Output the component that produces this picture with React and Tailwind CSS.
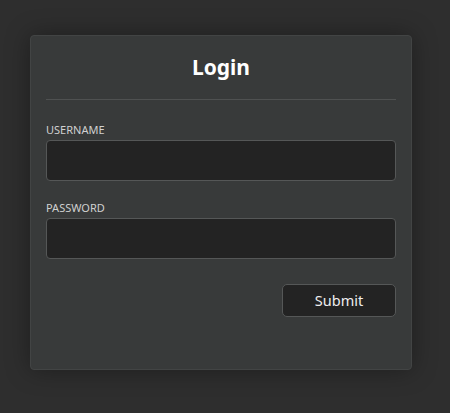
export default function App() {
  return (
    <div
      className="min-h-[413px] w-full bg-[#2e2e2e] pt-[35px]"
      style={{ fontFamily: '"Noto Sans", "Open Sans", sans-serif' }}
    >
      <div className="ml-[30px] h-[335px] w-[382px] rounded-[4px] border border-[#424444] bg-[#383a3a] px-[15px] shadow-[0_0_24px_rgba(0,0,0,0.35)]">
        <div className="border-b border-[#4f5151] pb-[16px] pt-[15px] text-center text-[21px] font-bold leading-[32px] text-white">
          Login
        </div>
        <form className="pt-[22px]" onSubmit={(e) => e.preventDefault()}>
          <label className="block text-[11px] leading-[16px] text-[#d0d0d0]">USERNAME</label>
          <input
            type="text"
            className="mt-[2px] block h-[41px] w-full rounded-[4px] border border-[#555757] bg-[#232323] px-2 text-sm text-white outline-none"
          />
          <label className="mt-[19px] block text-[11px] leading-[16px] text-[#d0d0d0]">PASSWORD</label>
          <input
            type="password"
            className="mt-[2px] block h-[41px] w-full rounded-[4px] border border-[#555757] bg-[#232323] px-2 text-sm text-white outline-none"
          />
          <div className="mt-[25px] flex justify-end">
            <button
              type="submit"
              className="h-[33px] w-[114px] rounded-[5px] border border-[#555757] bg-[#232323] text-[14.5px] text-[#eeeeee]"
            >
              Submit
            </button>
          </div>
        </form>
      </div>
    </div>
  );
}
